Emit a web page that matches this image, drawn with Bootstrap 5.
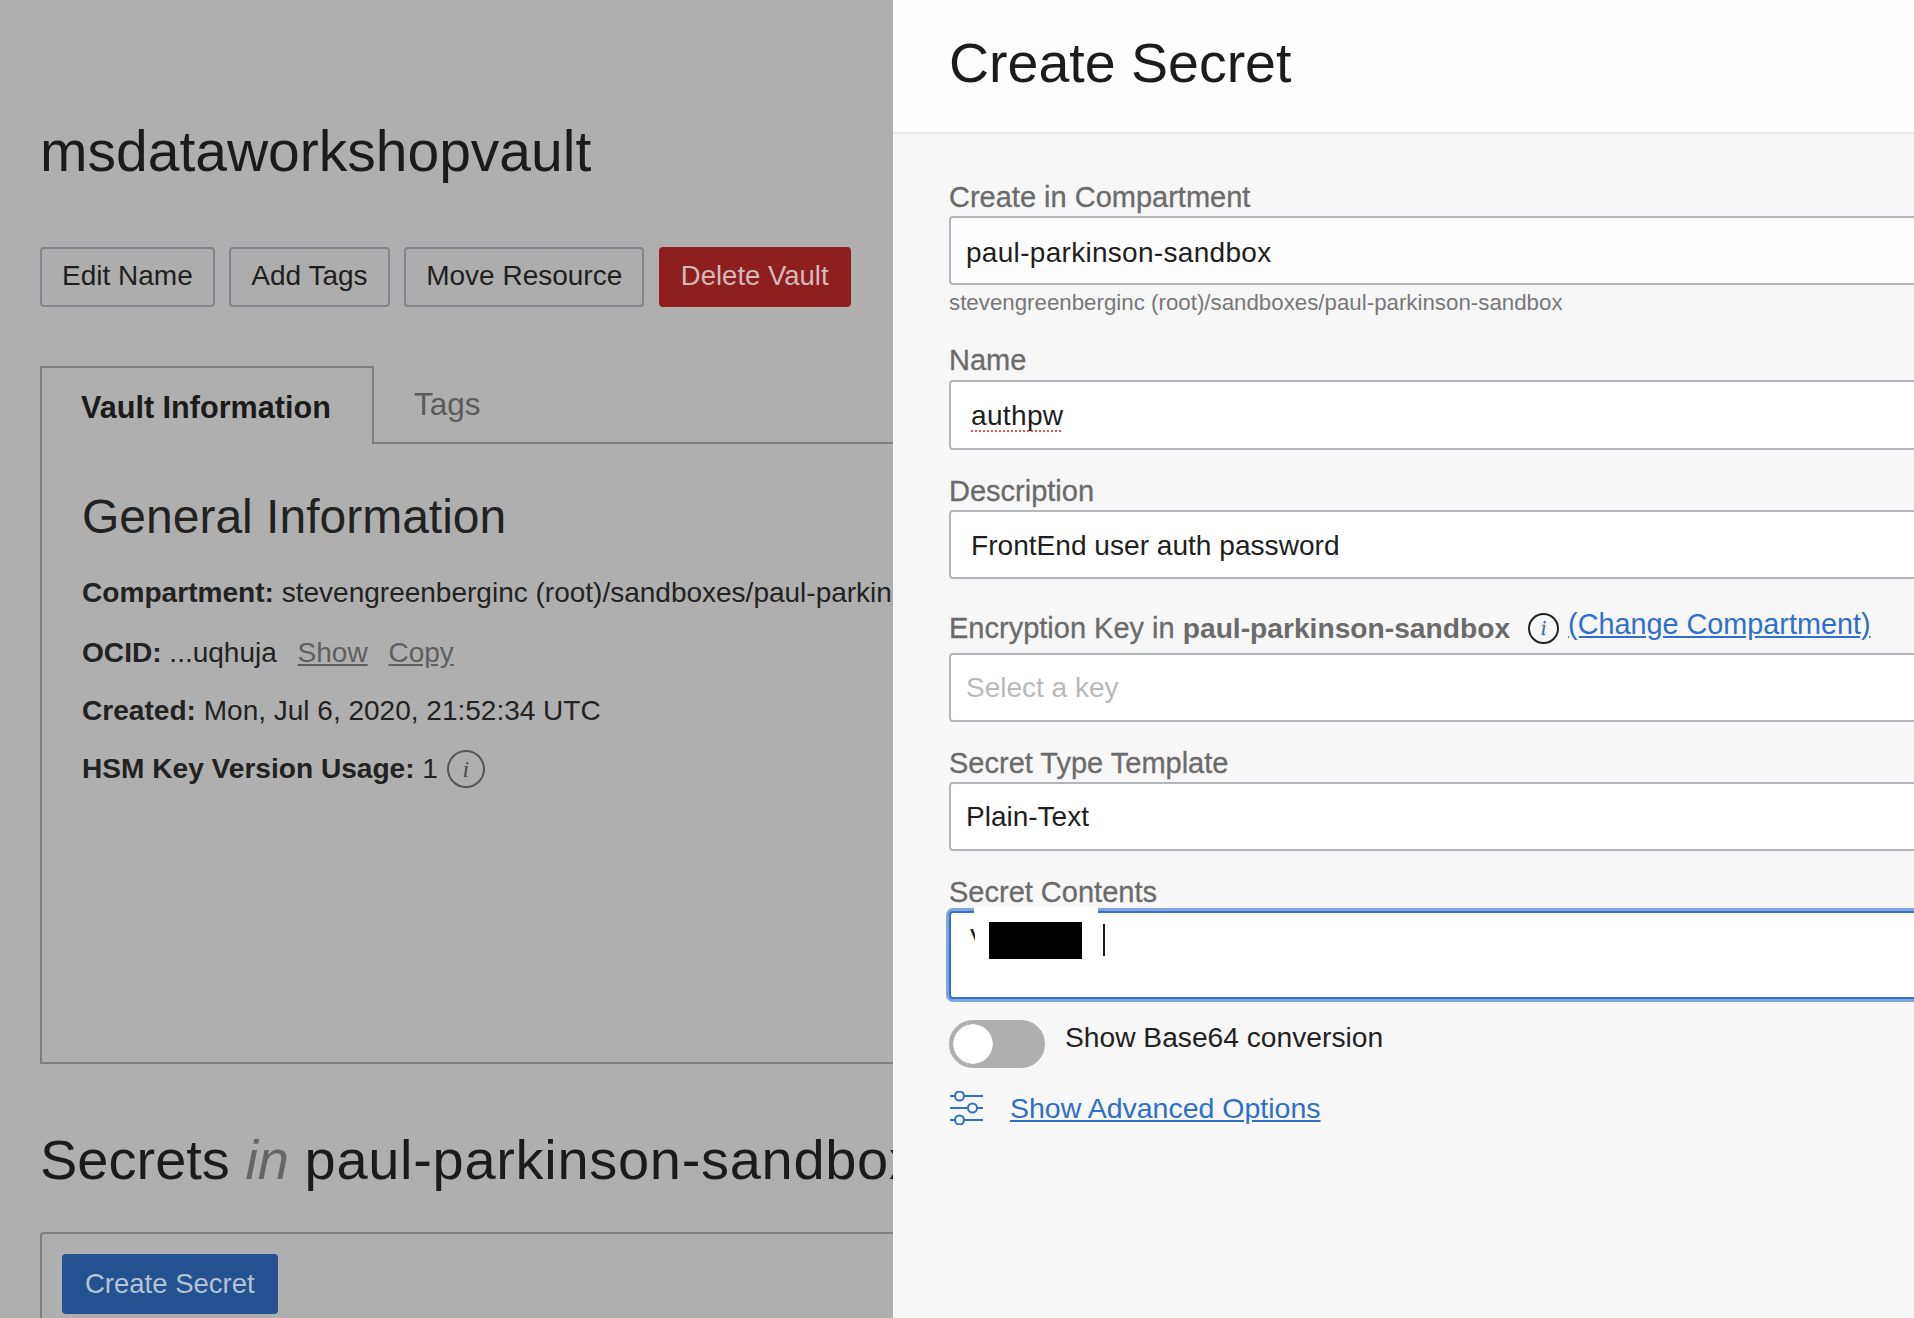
<!DOCTYPE html>
<html lang="en">
<head>
    <meta charset="UTF-8">
    <title>Create Secret</title>
    <link href="https://cdn.jsdelivr.net/npm/bootstrap@5.3.3/dist/css/bootstrap.min.css" rel="stylesheet">
    <style>
        html, body { height: 100%; }
        body { font-family: "Liberation Sans", Arial, sans-serif; font-size: 28px; background: #afafaf; color: #1d1d1d; overflow: hidden; }

        /* page behind the drawer */
        .page-side { width: 893px; height: 1318px; flex: none; overflow: hidden; background: #afafaf; padding-left: 40px; }
        .vault-title { font-size: 57px; line-height: 72px; margin: 115px 0 60px; font-weight: 400; color: #1b1b1b; white-space: nowrap; }
        .btn-row { gap: 14.6px; }
        .btn-vault { font-size: 28px; line-height: 34px; padding: 10px 20px 12px; border: 2px solid #82868a; border-radius: 4px; color: #1f1f1f; background: #adadad; white-space: nowrap; }
        .btn-delete { font-size: 27.5px; background: #8e1f1f; border-color: #8e1f1f; color: #d5b9b9; }
        .vault-tabs { margin-top: 59px; height: 78px; flex-wrap: nowrap; border-bottom: 2px solid #7e7e7e; }
        .vault-tabs .nav-link { font-size: 31.5px; line-height: 36px; padding: 20px 33px 20px 40px; height: 78px; border: 0; border-radius: 0; background: transparent; color: #5b5b5b; }
        .vault-tabs .nav-link.active { width: 334px; padding-left: 39px; font-size: 30.6px; font-weight: 700; color: #1b1b1b; background: #afafaf; border: 2px solid #7e7e7e; border-bottom: 0; padding-top: 21px; white-space: nowrap; }
        .tab-box { height: 620px; border-left: 2px solid #7e7e7e; border-bottom: 2px solid #7e7e7e; padding: 44px 0 0 40px; }
        .info-title { font-size: 48px; line-height: 58px; margin: 0 0 30px; font-weight: 400; color: #222; }
        .info-row { line-height: 34px; margin-bottom: 24px; white-space: nowrap; color: #222; }
        .info-row b { font-size: 28.1px; }
        .info-row a { color: #5f5f5f; margin-left: 13px; }
        .info-row-first { margin-bottom: 26px; }
        .info-row-last { margin-top: -2px; }
        .info-dot { width: 38px; height: 38px; font-size: 24px; margin-left: 9px; border: 2px solid #565656; color: #4a4a4a; }
        .secrets-title { font-size: 56px; line-height: 66px; margin: 63px 0 39px; font-weight: 400; white-space: nowrap; color: #1b1b1b; }
        .secrets-title em { color: #666; }
        .secrets-name { letter-spacing: .7px; }
        .secrets-box { border: 2px solid #7e7e7e; border-right: 0; border-radius: 4px 0 0 0; padding: 20px; height: 200px; }
        .btn-create { font-size: 27.5px; line-height: 34px; padding: 13px 23px; border: 0; border-radius: 4px; background: #24518f; color: #b4c2d6; }

        /* drawer */
        .drawer { flex: 1 1 auto; min-width: 0; height: 1318px; overflow: hidden; background: #f7f7f7; }
        .drawer-head { height: 134px; background: #fdfdfd; border-bottom: 2px solid #e7e7e7; padding: 30px 0 0 56px; }
        .drawer-head h1 { font-size: 55.5px; line-height: 66px; margin: 0; font-weight: 400; color: #1c1c1c; }
        .drawer-form { padding: 46px 0 0 56px; margin-right: -20px; }
        .field-label { display: block; font-size: 29px; line-height: 34px; margin: 0 0 2px; color: #6b6b6b; -webkit-text-stroke: .3px #6b6b6b; white-space: nowrap; }
        .field-label b { font-size: 28.2px; -webkit-text-stroke: 0; }
        .field-input, .field-input:focus { height: 69px; font-size: 28px; line-height: 34px; padding: 4px 15px 0; color: #1e1e1e; background: #fff; border: 2px solid #b3b7bb; border-radius: 4px; box-shadow: none; }
        .field-input::placeholder { color: #b9b9b9; }
        .field-pad, .field-pad:focus { padding-left: 20px; padding-right: 16px; padding-top: 2px; font-size: 28.1px; }
        .field-key, .field-key:focus { padding-top: 1px; }
        .field-plain { background: #fdfdfd; letter-spacing: .3px; }
        .field-name { height: 70px; }
        .spell-word { letter-spacing: .3px; text-decoration: underline dotted #e25555 2px; text-decoration-skip-ink: none; text-underline-offset: 5px; }
        .field-help { font-size: 22.3px; line-height: 30px; margin-top: 3px; color: #777; white-space: nowrap; }
        .field-gap { margin-top: 24px; }
        .name-label { margin-top: 25px; margin-bottom: 3px; }
        .key-label { height: 46px; margin-top: 26px; }
        .key-dot { width: 31px; height: 31px; font-size: 20px; margin: 0 9px 0 18px; border: 2px solid #222; color: #2f6fc9; }
        .key-link { font-size: 28.8px; color: #2f6fc9; position: relative; top: -4px; -webkit-text-stroke: 0; }
        .circle-i { border-radius: 50%; font-family: "Liberation Serif", serif; font-style: italic; flex: none; }
        .secret-wrap { position: relative; }
        .secret-area, .secret-area:focus { height: 88px; resize: none; border: 2px solid #3471cc; border-radius: 4px; background: #fff; box-shadow: 0 0 0 3px #7fa5dc; padding: 8px 20px; font-size: 28px; color: #1e1e1e; }
        .mask-strip { position: absolute; left: 25px; top: -4px; width: 124px; height: 7px; background: #fff; }
        .mask-char { position: absolute; left: 21px; top: 11px; width: 5px; line-height: 34px; overflow: hidden; color: #1e1e1e; }
        .mask-black { position: absolute; left: 40px; top: 11px; width: 93px; height: 37px; background: #000; }
        .mask-caret { position: absolute; left: 154px; top: 13px; width: 2px; height: 32px; background: #1e1e1e; }
        .toggle-row { margin-top: 21px; padding: 0; min-height: 0; gap: 20px; }
        .toggle-row .form-check-input { float: none; margin: 0; width: 96px; height: 48px; flex: none; border: 0; border-radius: 24px; background-color: #afafaf; background-position: 4px center; background-size: 40px 40px; background-repeat: no-repeat; background-image: radial-gradient(circle closest-side, #fff 97%, transparent 100%); box-shadow: none; }
        .toggle-row .form-check-label { font-size: 28.2px; line-height: 34px; color: #222; }
        .advanced-row { margin-top: 23px; gap: 26px; height: 34px; }
        .advanced-row a { font-size: 28.5px; color: #2f6fc9; }
        .advanced-row svg { flex: none; }
    </style>
</head>
<body>
    <div class="d-flex">
        <!-- Pagina de fondo -->
        <div class="page-side">
            <h2 class="vault-title">msdataworkshopvault</h2>
            <div class="d-flex btn-row">
                <button class="btn btn-vault">Edit Name</button>
                <button class="btn btn-vault">Add Tags</button>
                <button class="btn btn-vault">Move Resource</button>
                <button class="btn btn-vault btn-delete">Delete Vault</button>
            </div>

            <ul class="nav vault-tabs">
                <li class="nav-item"><a class="nav-link active" href="#">Vault Information</a></li>
                <li class="nav-item"><a class="nav-link" href="#">Tags</a></li>
            </ul>
            <div class="tab-box">
                <h3 class="info-title">General Information</h3>
                <div class="info-row info-row-first"><b>Compartment:</b> stevengreenberginc (root)/sandboxes/paul-parkinson-sandbox</div>
                <div class="info-row"><b>OCID:</b> ...uqhuja <a href="#">Show</a> <a href="#">Copy</a></div>
                <div class="info-row"><b>Created:</b> Mon, Jul 6, 2020, 21:52:34 UTC</div>
                <div class="info-row info-row-last d-flex align-items-center"><b>HSM Key Version Usage:</b>&nbsp;1<span class="circle-i info-dot d-inline-flex align-items-center justify-content-center">i</span></div>
            </div>

            <h2 class="secrets-title">Secrets <em>in</em> <span class="secrets-name">paul-parkinson-sandbox</span></h2>
            <div class="secrets-box">
                <button class="btn btn-create">Create Secret</button>
            </div>
        </div>

        <!-- Panel lateral -->
        <div class="drawer">
            <div class="drawer-head"><h1>Create Secret</h1></div>
            <form class="drawer-form">
                <label class="field-label">Create in Compartment</label>
                <input type="text" class="form-control field-input field-plain" value="paul-parkinson-sandbox">
                <div class="field-help">stevengreenberginc (root)/sandboxes/paul-parkinson-sandbox</div>

                <label class="field-label name-label">Name</label>
                <div class="form-control field-input field-pad field-name d-flex align-items-center"><span class="spell-word">authpw</span></div>

                <label class="field-label field-gap">Description</label>
                <input type="text" class="form-control field-input field-pad" value="FrontEnd user auth password">

                <div class="key-label field-label d-flex align-items-center">
                    <span>Encryption Key in <b>paul-parkinson-sandbox</b></span>
                    <span class="circle-i key-dot d-inline-flex align-items-center justify-content-center">i</span>
                    <a href="#" class="key-link">(Change Compartment)</a>
                </div>
                <input type="text" class="form-control field-input field-key" placeholder="Select a key">

                <label class="field-label field-gap">Secret Type Template</label>
                <input type="text" class="form-control field-input field-key" value="Plain-Text">

                <label class="field-label field-gap">Secret Contents</label>
                <div class="secret-wrap">
                    <textarea class="form-control secret-area"></textarea>
                    <span class="mask-strip"></span>
                    <span class="mask-char">V</span>
                    <span class="mask-black"></span>
                    <span class="mask-caret"></span>
                </div>

                <div class="form-check form-switch toggle-row d-flex">
                    <input class="form-check-input" type="checkbox" role="switch" id="base64">
                    <label class="form-check-label" for="base64">Show Base64 conversion</label>
                </div>

                <div class="advanced-row d-flex align-items-center">
                    <svg width="35" height="34" viewBox="0 0 35 34" fill="none" stroke="#2f6fc9" stroke-width="2">
                        <path d="M1 5h5M15 5h19M1 17h18M28 17h6M1 29h5M15 29h19"/>
                        <circle cx="10.5" cy="5" r="4.5"/>
                        <circle cx="23.5" cy="17" r="4.5"/>
                        <circle cx="10.5" cy="29" r="4.5"/>
                    </svg>
                    <a href="#">Show Advanced Options</a>
                </div>
            </form>
        </div>
    </div>

    <script src="https://cdn.jsdelivr.net/npm/bootstrap@5.3.3/dist/js/bootstrap.bundle.min.js"></script>
</body>
</html>
